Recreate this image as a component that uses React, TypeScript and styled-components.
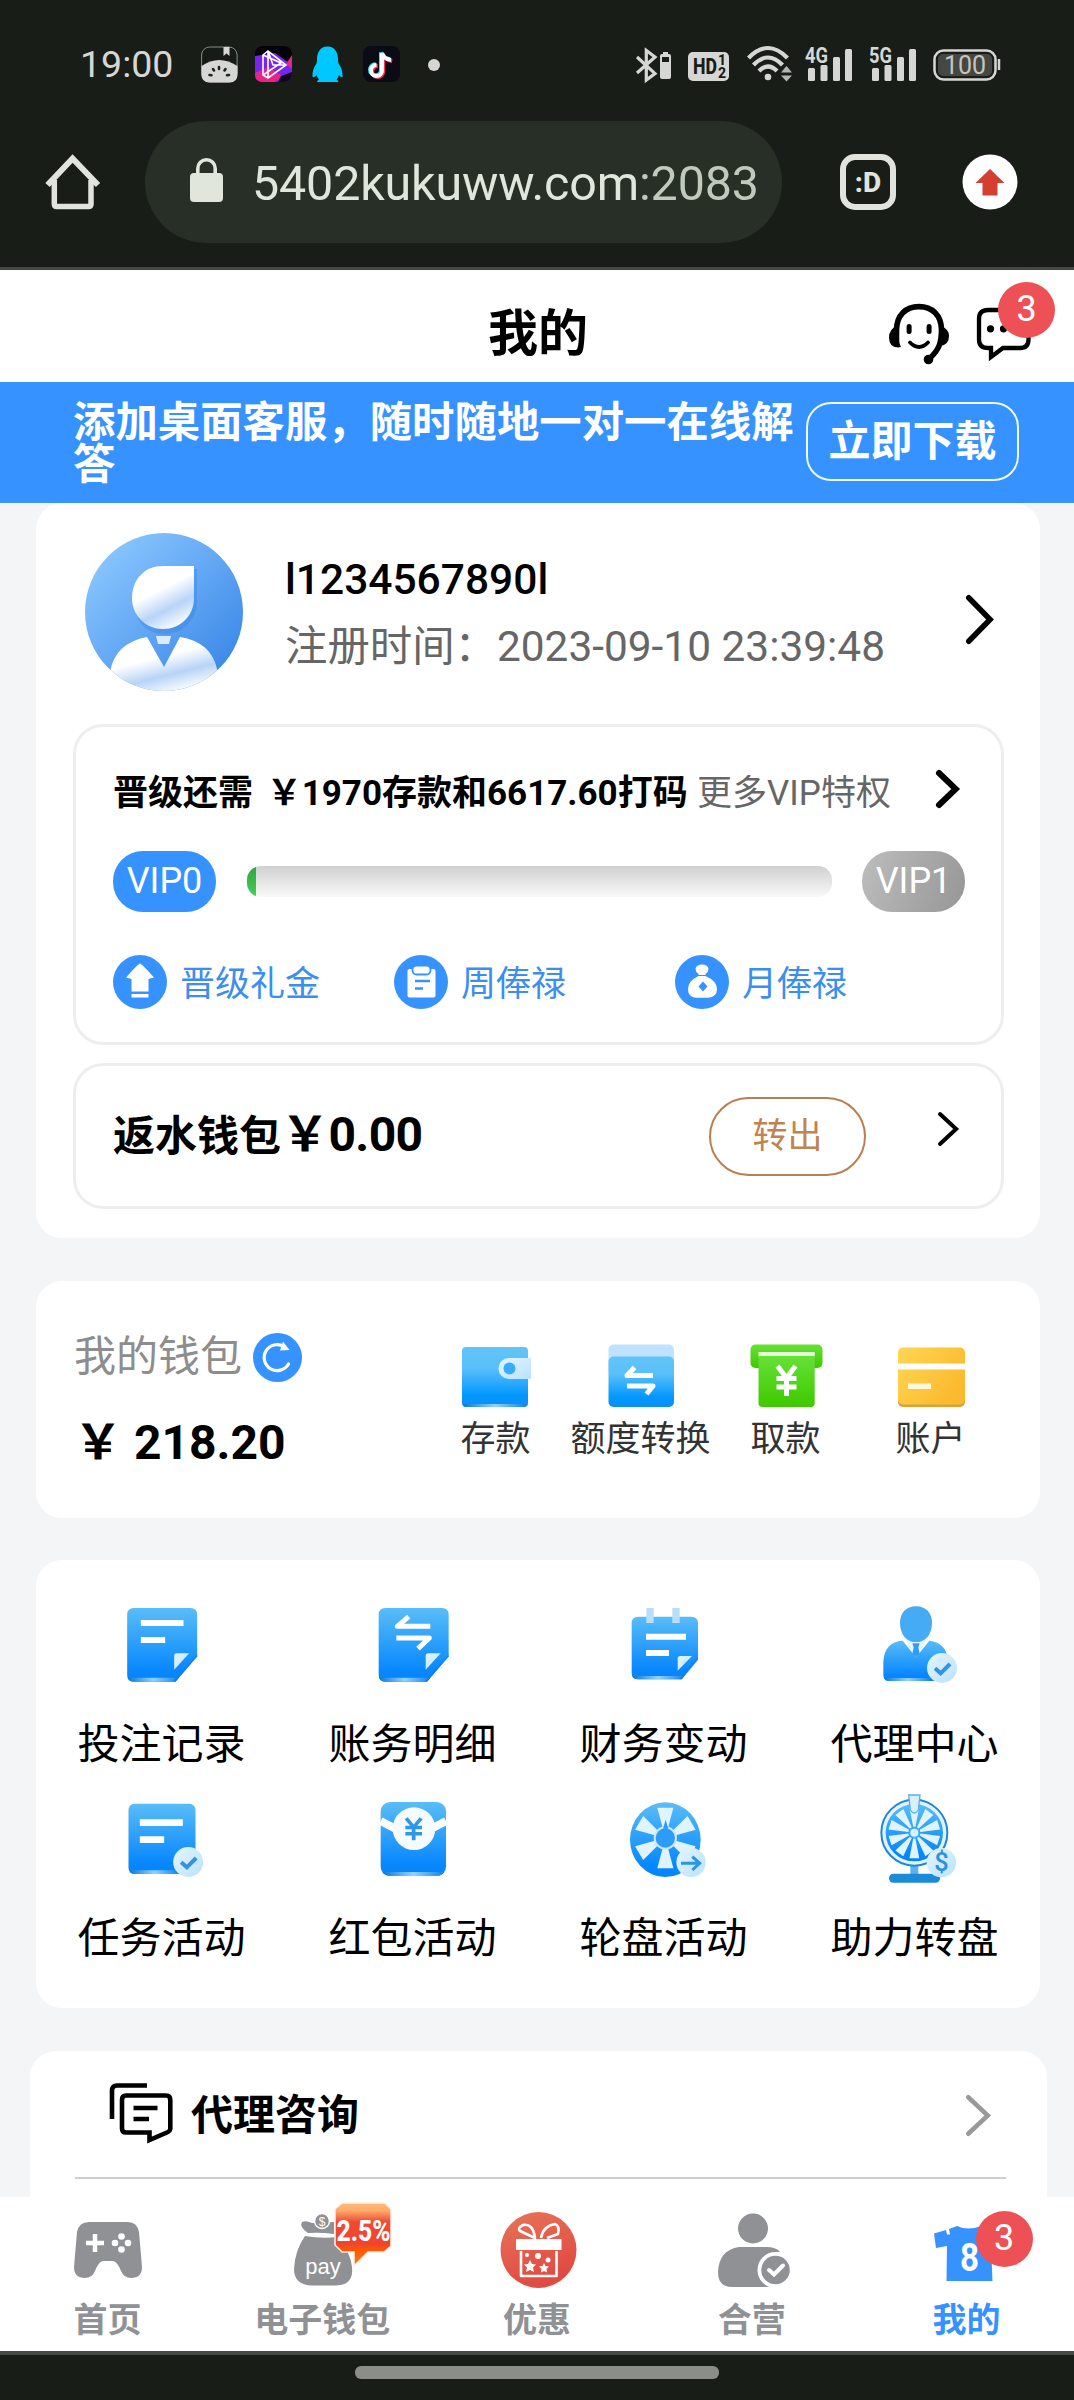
import React from "react";
import styled, { createGlobalStyle } from "styled-components";

const GlobalStyle = createGlobalStyle`
  * { box-sizing: border-box; }
  body {
    margin: 0;
    background: #f4f5f7;
    font-family: Roboto, "Noto Sans CJK SC", sans-serif;
    color: #000;
  }
  svg { display: block; flex: none; overflow: visible; }
`;

const Screen = styled.div`
  width: 1074px;
  height: 2400px;
  display: flex;
  flex-direction: column;
  overflow: hidden;
`;

/* ---------- phone chrome ---------- */

const Chrome = styled.div`
  height: 270px;
  flex: none;
  background: #191d17;
  border-bottom: 3px solid #454943;
`;

const StatusBar = styled.div`
  height: 121px;
  padding: 0 73px 0 80px;
  display: flex;
  align-items: flex-start;
  justify-content: space-between;
`;

const StatusGroup = styled.div<{ $gap: number }>`
  display: flex;
  align-items: center;
  gap: ${(p) => p.$gap}px;
  height: 38px;
  margin-top: 45px;
`;

const Clock = styled.span`
  width: 104px;
  font-size: 37.5px;
  line-height: 38px;
  color: #d6d7d5;
`;

const WifiSlot = styled.span`
  margin: 0 -4px 0 1px;
`;

const AddressBar = styled.div`
  height: 122px;
  padding: 0 50px 0 40px;
  display: flex;
  align-items: center;
`;

const UrlField = styled.div`
  width: 637px;
  height: 122px;
  margin: 0 58px 0 40px;
  padding: 2px 0 0 45px;
  border-radius: 61px;
  background: #272f26;
  display: flex;
  align-items: center;
  gap: 28px;
  font-size: 48.4px;
  letter-spacing: -0.15px;
  color: #e1e6dc;
  white-space: nowrap;
`;

const Port = styled.span`
  color: #bfc9bc;
`;

const TabCount = styled.div`
  width: 56px;
  height: 56px;
  margin-right: 66px;
  border: 6px solid #e1e4dd;
  border-radius: 15px;
  display: flex;
  align-items: center;
  justify-content: center;
  font-size: 28px;
  font-weight: 800;
  color: #e1e4dd;
`;

/* ---------- page header ---------- */

const Header = styled.header`
  height: 112px;
  flex: none;
  padding-top: 13px;
  background: #fff;
  display: grid;
  grid-template-columns: 1fr auto 1fr;
  align-items: center;
`;

const Title = styled.h1`
  margin: 0;
  padding: 2px 0 0 2px;
  grid-column: 2;
  font-size: 50px;
  line-height: 60px;
  font-weight: 700;
`;

const HeaderActions = styled.div`
  display: flex;
  justify-content: flex-end;
  gap: 17px;
  padding-right: 36px;
`;

const WithBadge = styled.div`
  position: relative;
`;

const CountBadge = styled.span<{ $top: number; $left: number }>`
  position: absolute;
  top: ${(p) => p.$top}px;
  left: ${(p) => p.$left}px;
  width: 57px;
  height: 56px;
  border-radius: 50%;
  background: #ed5156;
  color: #fff;
  font-size: 36px;
  font-weight: 400;
  line-height: 54px;
  text-align: center;
`;

const Banner = styled.div`
  height: 121px;
  flex: none;
  padding: 20px 55px 0 73px;
  background: #3692ff;
  display: flex;
  justify-content: space-between;
  color: #fff;
  font-weight: 700;
  font-size: 42.4px;
`;

const BannerText = styled.p`
  margin: 0;
  width: 724px;
  line-height: 42px;
`;

const DownloadButton = styled.button`
  width: 213px;
  height: 79px;
  margin: 0;
  padding: 0;
  border: 2.5px solid #f0faff;
  border-radius: 25px;
  background: transparent;
  color: #fff;
  font: inherit;
  font-size: 42px;
  line-height: 72px;
`;

/* ---------- cards ---------- */

const Main = styled.main`
  height: 1694px;
  flex: none;
  padding: 0 34px 0 36px;
  overflow: hidden;
`;

const Card = styled.section<{ $h: number; $mb: number }>`
  height: ${(p) => p.$h}px;
  margin-bottom: ${(p) => p.$mb}px;
  border-radius: 26px;
  background: #fff;
`;

const ProfileCard = styled(Card)`
  padding: 30px 36px 0 37px;
`;

const Profile = styled.div`
  height: 191px;
  padding: 0 10px 0 12px;
  display: flex;
  align-items: flex-start;
`;

const ProfileText = styled.div`
  flex: 1;
  margin-left: 42px;
  padding-top: 17px;
`;

const UserName = styled.div`
  font-size: 42.5px;
  font-weight: 500;
  line-height: 60px;
`;

const Registered = styled.div`
  margin-top: 7px;
  font-size: 42.4px;
  line-height: 60px;
  color: #666;
  white-space: nowrap;
`;

const ChevronSlot = styled.div<{ $mt: number; $mr?: number }>`
  margin-top: ${(p) => p.$mt}px;
  margin-right: ${(p) => p.$mr ?? 0}px;
`;

const Panel = styled.div<{ $h: number }>`
  height: ${(p) => p.$h}px;
  padding: 0 36px 0 37px;
  border: 3px solid #eee;
  border-radius: 30px;
`;

const UpgradeRow = styled.div`
  display: flex;
  align-items: center;
  height: 50px;
  margin-top: 37px;
  font-size: 35px;
  white-space: nowrap;
`;

const UpgradeText = styled.span`
  width: 584px;
  font-weight: 700;
  word-spacing: 5px;
`;

const Privileges = styled.span`
  flex: 1;
  color: #666;
`;

const LevelRow = styled.div`
  display: flex;
  align-items: center;
  justify-content: space-between;
  height: 61px;
  margin-top: 37px;
`;

const LevelPill = styled.span<{ $muted?: boolean }>`
  width: 103px;
  height: 61px;
  border-radius: 30px;
  background: ${(p) => (p.$muted ? "linear-gradient(110deg, #bdbdbd, #969696)" : "#3692ff")};
  color: #fff;
  font-size: 36px;
  line-height: 60px;
  text-align: center;
`;

const Track = styled.div`
  width: 585px;
  height: 31px;
  border-radius: 14px;
  overflow: hidden;
  background: linear-gradient(#d0d0d0, #f9f9f9);
`;

const Fill = styled.div`
  width: 9px;
  height: 100%;
  background: linear-gradient(#2fa53d, #45d05a);
`;

const BonusRow = styled.div`
  display: grid;
  grid-template-columns: repeat(3, 281px);
  margin-top: 42px;
`;

const Bonus = styled.div`
  display: flex;
  align-items: center;
  gap: 13px;
  height: 55px;
  font-size: 35px;
  color: #3b8eee;
`;

const BonusLabel = styled.span`
  padding-bottom: 3px;
`;

const RebatePanel = styled(Panel)`
  margin-top: 18px;
  display: flex;
  align-items: center;
`;

const RebateText = styled.div`
  flex: 1;
  font-size: 42px;
  line-height: 60px;
  font-weight: 700;
  white-space: nowrap;
`;

const RebateAmount = styled.span`
  font-size: 48px;
  letter-spacing: -0.6px;
`;

const TransferButton = styled.button`
  width: 157px;
  height: 79px;
  margin-right: 72px;
  padding: 0 0 7px;
  border: 2.5px solid #b97f52;
  border-radius: 40px;
  background: #fff;
  color: #c08452;
  font: inherit;
  font-size: 35px;
`;

const WalletCard = styled(Card)`
  display: flex;
  justify-content: space-between;
  padding: 0 37px 0 38px;
`;

const WalletTitle = styled.div`
  display: flex;
  align-items: center;
  gap: 11px;
  height: 60px;
  margin-top: 41px;
  font-size: 42px;
  color: #8d8d8d;
`;

const RefreshSlot = styled.span`
  padding-top: 11px;
`;

const Balance = styled.div`
  margin-top: 31px;
  font-size: 48px;
  font-weight: 700;
  line-height: 60px;
  white-space: pre;
`;

const WalletActions = styled.div`
  display: grid;
  grid-template-columns: repeat(4, 145px);
  padding-top: 62px;
`;

const WalletAction = styled.div`
  display: flex;
  flex-direction: column;
  align-items: center;
  font-size: 35px;
  line-height: 50px;
  color: #333;
  white-space: nowrap;
`;

const ActionIcon = styled.svg`
  width: 80px;
  height: 66px;
  margin-bottom: 6px;
`;

const MenuGrid = styled(Card)`
  display: grid;
  grid-template-columns: repeat(4, 1fr);
  grid-auto-rows: 194px;
  padding-top: 36px;
`;

const MenuItem = styled.div`
  display: flex;
  flex-direction: column;
  align-items: center;
  font-size: 42px;
  line-height: 60px;
`;

const MenuIcon = styled.svg`
  width: 84px;
  height: 100px;
  margin-bottom: 19px;
`;

const ContactCard = styled(Card)`
  margin: 0 -7px 0 -6px;
  padding: 0 41px 0 45px;
`;

const ContactRow = styled.div`
  height: 128px;
  padding: 0 15px 0 30px;
  border-bottom: 2px solid #cfcfcf;
  display: flex;
  align-items: center;
  font-size: 42px;
  font-weight: 700;
`;

const ContactLabel = styled.span`
  flex: 1;
  margin-left: 14px;
  padding-bottom: 5px;
`;

/* ---------- bottom bar ---------- */

const TabBar = styled.nav`
  height: 154px;
  flex: none;
  background: #fff;
  display: grid;
  grid-template-columns: repeat(5, 1fr);
`;

const Tab = styled.div<{ $active?: boolean }>`
  display: flex;
  flex-direction: column;
  align-items: center;
  padding-top: 3px;
  font-size: 34px;
  font-weight: 700;
  line-height: 54px;
  color: ${(p) => (p.$active ? "#3692ff" : "#909195")};
`;

const TabIcon = styled.svg`
  width: 130px;
  height: 93px;
`;

const GestureBar = styled.div`
  height: 49px;
  flex: none;
  border-top: 4px solid #454943;
  background: #191d17;
  display: flex;
  justify-content: center;
  padding-top: 11px;
`;

const GesturePill = styled.div`
  width: 364px;
  height: 13px;
  border-radius: 6px;
  background: #8b8d88;
`;

/* ---------- icons ---------- */

const Chevron = ({ w, h, s, c = "#000" }: { w: number; h: number; s: number; c?: string }) => (
  <svg width={w} height={h} fill="none" stroke={c} strokeWidth={s} strokeLinecap="round">
    <path d={`M${s / 2} ${s / 2} L${w - s / 1.4} ${h / 2} L${s / 2} ${h - s / 2}`} />
  </svg>
);

const Signal = ({ label }: { label: string }) => (
  <svg width="48" height="38" viewBox="0 0 48 38" fill="#d6d7d5">
    <text x="0" y="17.500" fontSize="22" fontWeight="700" fontFamily="Roboto" textLength="23" lengthAdjust="spacingAndGlyphs">{label}</text>
    <rect x="3" y="23" width="7" height="13" rx="1.500" />
    <rect x="15.500" y="20" width="7" height="16" rx="1.500" />
    <rect x="28" y="12" width="7" height="24" rx="1.500" />
    <rect x="40" y="4" width="7" height="32" rx="1.500" />
  </svg>
);

const Gradients = () => (
  <svg width="0" height="0">
    <defs>
      <linearGradient id="blue" x1="0" y1="0" x2="0" y2="1">
        <stop offset="0" stopColor="#59bdf7" />
        <stop offset="0.85" stopColor="#0787ff" />
        <stop offset="1" stopColor="#0a83f5" />
      </linearGradient>
      <linearGradient id="sky" x1="0" y1="0" x2="0" y2="1">
        <stop offset="0" stopColor="#62c4f8" />
        <stop offset="0.35" stopColor="#5ac0fa" />
        <stop offset="0.8" stopColor="#0398ff" />
        <stop offset="1" stopColor="#0c8ff0" />
      </linearGradient>
      <linearGradient id="pale" x1="0" y1="0" x2="1" y2="1">
        <stop offset="0" stopColor="#e4f5ff" />
        <stop offset="1" stopColor="#b9e2ff" />
      </linearGradient>
      <linearGradient id="glint" x1="0" x2="1">
        <stop offset="0" stopColor="#0a78d8" />
        <stop offset="0.5" stopColor="#8fd4ff" />
        <stop offset="1" stopColor="#1183ea" />
      </linearGradient>
      <linearGradient id="green" x1="0" y1="0" x2="0" y2="1">
        <stop offset="0" stopColor="#66e136" />
        <stop offset="1" stopColor="#3fc800" />
      </linearGradient>
      <linearGradient id="gold" x1="0" y1="0" x2="1" y2="0.6">
        <stop offset="0" stopColor="#ffd654" />
        <stop offset="1" stopColor="#fbb92e" />
      </linearGradient>
      <linearGradient id="avatarBg" x1="0" y1="0" x2="1" y2="1">
        <stop offset="0.1" stopColor="#8ac7ff" />
        <stop offset="0.9" stopColor="#3a87e8" />
      </linearGradient>
      <linearGradient id="silk" x1="0.2" y1="0" x2="0.7" y2="1">
        <stop offset="0.4" stopColor="#fff" />
        <stop offset="0.7" stopColor="#b7d4f7" />
        <stop offset="1" stopColor="#fff" />
      </linearGradient>
      <linearGradient id="red" x1="0" y1="0" x2="0.4" y2="1">
        <stop offset="0" stopColor="#e87458" />
        <stop offset="1" stopColor="#e04a42" />
      </linearGradient>
      <linearGradient id="orange" x1="0" y1="0" x2="0" y2="1">
        <stop offset="0" stopColor="#ffbb78" />
        <stop offset="0.12" stopColor="#ffab6a" />
        <stop offset="0.3" stopColor="#ee4a35" />
        <stop offset="0.65" stopColor="#ef4530" />
        <stop offset="0.75" stopColor="#ff5a00" />
        <stop offset="1" stopColor="#ff7a1a" />
      </linearGradient>
    </defs>
  </svg>
);

const BluetoothIcon = () => (
  <svg width="36" height="38" viewBox="0 0 36 38">
    <path d="M1 12 L19 28.500 L10.300 35 V5.500 L19 12 L1 28" fill="none" stroke="#d6d7d5" strokeWidth="3.200" />
    <rect x="27" y="7" width="5" height="4" fill="#d6d7d5" />
    <path d="M26 9h7q2 0 2 2v21q0 2-2 2h-7q-2 0-2-2V11q0-2 2-2zM26 12v5h7v-5z" fill="#d6d7d5" fillRule="evenodd" />
  </svg>
);

const HdIcon = () => (
  <svg width="42" height="38" viewBox="0 0 42 38">
    <rect x="0" y="7" width="41" height="29" rx="5" fill="#d6d7d5" />
    <g fill="#191d17" fontFamily="Roboto" fontWeight="800">
      <text x="5" y="29" fontSize="22" textLength="24" lengthAdjust="spacingAndGlyphs">HD</text>
      <text x="30" y="20" fontSize="14">1</text>
      <text x="30" y="33" fontSize="14">2</text>
    </g>
  </svg>
);

const WifiIcon = () => (
  <svg width="46" height="38" viewBox="0 0 46 38">
    <g fill="none" stroke="#d6d7d5" strokeWidth="4.200">
      <path d="M1.500 13 Q21 -7 40.500 13" />
      <path d="M6.500 20 Q21 5 35.500 20" />
      <path d="M12 26 Q21 17 30 26" />
    </g>
    <circle cx="21" cy="32" r="3.300" fill="#d6d7d5" />
    <path d="M34 27.500h11L39.500 21zM34 30.500h11L39.500 36.500z" fill="#b4b6b3" />
  </svg>
);

const BatteryIcon = () => (
  <svg width="68" height="38" viewBox="0 0 68 38">
    <rect x="1.500" y="5.500" width="61" height="29" rx="9" fill="none" stroke="#d6d7d5" strokeWidth="2.500" />
    <rect x="5" y="9" width="54" height="22" rx="5" fill="#444743" />
    <path d="M66 14v11" stroke="#d6d7d5" strokeWidth="2.500" />
    <text x="32" y="29" fontSize="25" fontFamily="Roboto" fill="#c3c5c2" textAnchor="middle">100</text>
  </svg>
);

const MelonIcon = () => (
  <svg width="37" height="38" viewBox="0 0 37 38">
    <rect x="0.600" y="2" width="35.500" height="35" rx="8" fill="#171b16" stroke="#8a8c89" strokeWidth="1" />
    <path d="M0.500 21 Q18 9 36.500 21 V29q0 8.500-8 8.500H8.500q-8 0-8-8.500z" fill="#d6d7d5" />
    <path d="M22.500 2h6v9l-3-2.500-3 2.500z" fill="#d6d7d5" />
    <g stroke="#20241f" strokeWidth="2.600" strokeLinecap="round">
      <path d="M18 22v2M12 24l1 1.500M24.500 24l-1 1.500M8.500 30l2 .3M28 30l-2 .3" />
    </g>
  </svg>
);

const PrismIcon = () => (
  <svg width="37" height="38" viewBox="0 0 37 38">
    <rect y="1" width="37" height="36" rx="8" fill="#050108" />
    <path d="M0 11 L20 8 L37 20 V29q0 8-8 8H8q-8 0-8-8z" fill="#7426ec" />
    <path d="M0 28 L14 22 L27 31 L20 37H8q-8 0-8-8zM31 19l6-9v14z" fill="#e92489" />
    <path d="M26 31l11-4v2q0 8-8 8h-6z" fill="#12051f" />
    <path d="M8 10l5-4 18 14-18 13-5-3zM13 6v27M8 10l18 8-18 12M31 20H18l-5-14" fill="none" stroke="#fff" strokeWidth="1.600" />
  </svg>
);

const PenguinIcon = () => (
  <svg width="37" height="38" viewBox="-3 0 37 38">
    <path d="M15.500 1.500C23 1.500 26 8 26 14q0 3 .8 5C29 22 31 27 30.500 32q-1 1-3.500-2-1 3-2.500 4.500 2 1 2 2.500H5q0-1.500 2-2.500Q5.500 33 4.500 30 2 33 .7 32C0 27 2 22 4.200 19 5 17 5 15.500 5 14 5 8 8 1.500 15.500 1.500z" fill="#00c8ff" />
  </svg>
);

const NoteIcon = () => {
  const d = "M19 8v17.500a5.500 5.500 0 1 1-5.500-5.500M19 8q1.500 6 9 7";
  return (
    <svg width="37" height="38" viewBox="0 0 37 38">
      <rect y="1" width="37" height="36" rx="8" fill="#0b0b15" />
      <g fill="none" strokeWidth="4">
        <path d={d} stroke="#2be8e2" transform="translate(-1 -.8)" />
        <path d={d} stroke="#fb3558" transform="translate(1.200 1)" />
        <path d={d} stroke="#fff" />
      </g>
    </svg>
  );
};

const HomeIcon = () => (
  <svg width="65" height="65" viewBox="0 0 65 65" fill="none" stroke="#e1e4dd" strokeWidth="5.500" strokeLinejoin="round">
    <path d="M7.500 35 L32.600 8.500 L58 35" strokeWidth="6" strokeLinejoin="miter" />
    <path d="M14.300 30 V54q0 2.500 2.500 2.500H48.500q2.500 0 2.500-2.500V30" />
  </svg>
);

const LockIcon = () => (
  <svg width="34" height="48" viewBox="0 2 34 48">
    <rect x="0" y="16" width="33" height="29" rx="4" fill="#e1e6dc" />
    <path d="M7.800 18v-6.500a8.700 8.700 0 0 1 17.400 0V18" fill="none" stroke="#e1e6dc" strokeWidth="3.600" />
  </svg>
);

const UpdateIcon = () => (
  <svg width="56" height="56" viewBox="0 0 56 56">
    <circle cx="28" cy="28" r="27.500" fill="#fff" />
    <path d="M28 15 L42.500 29 H35.500 V41.500 H20.500 V29 H13.500z" fill="#d33f30" />
  </svg>
);

const HeadsetIcon = () => (
  <svg width="68" height="68" viewBox="0 0 68 68">
    <path d="M11.500 45 V31 C11.500 16 21 7.600 34 7.600 S56.500 16 56.500 31 C56.500 44 54 51 44 60" fill="none" stroke="#000" strokeWidth="5.600" />
    <path d="M12 27 Q4 30 4 38.500 Q4 48 13 48.500 L16 48 Q12 40 12 27zM56 27 Q64 30 64 37 Q64 46 55 47 Q57 38 56 27z" fill="#000" />
    <circle cx="43.500" cy="60.500" r="4.800" fill="#000" />
    <rect x="21.600" y="25" width="5" height="10" rx="2.500" />
    <rect x="41.600" y="25" width="5" height="10" rx="2.500" />
    <path d="M25 43.500 Q34 52.500 43 43.500" fill="none" stroke="#000" strokeWidth="3.800" strokeLinecap="round" />
  </svg>
);

const ChatIcon = () => (
  <svg width="68" height="68" viewBox="0 0 68 68">
    <path d="M18 11 H50 Q58.500 11 58.500 19.500 V40.500 Q58.500 49 50 49 H33 L21 58 V49 H18 Q9 49 9 40.500 V19.500 Q9 11 18 11z" fill="none" stroke="#000" strokeWidth="4.300" />
    <circle cx="20.500" cy="29.800" r="3.600" />
    <circle cx="33.500" cy="29.800" r="3.600" />
    <circle cx="46.500" cy="29.800" r="3.600" />
  </svg>
);

const Avatar = () => (
  <svg width="158" height="158" viewBox="0 0 158 158">
    <clipPath id="round"><circle cx="79" cy="79" r="79" /></clipPath>
    <g clipPath="url(#round)">
      <rect width="158" height="158" fill="url(#avatarBg)" />
      <path d="M80 36 H112 V68 C112 86 98 101 80 101 S52 90 50 76z" fill="#2f78dc" opacity=".3" />
      <path d="M78 33 H109 V65 C109 83 95 96 78 96 S47 83 47 65 C47 46 60 33 78 33z" fill="url(#silk)" />
      <path d="M62 104 Q30 110 25 139 V158 H132 V136 Q126 109 95 104 L79 134z" fill="url(#silk)" />
      <path d="M71 103h15l-2 8H73z" fill="#dcebff" />
    </g>
  </svg>
);

const UpIcon = () => (
  <svg width="54" height="54" viewBox="0 0 54 54">
    <circle cx="27" cy="27" r="27" fill="#3692ff" />
    <path d="M27 8.500 Q28.500 8.500 41 22.500 L35.500 24 V36.500 H18.500 V24 L13 22.500 Q25.500 8.500 27 8.500zM18.500 39h17v3.500h-17z" fill="#fff" />
  </svg>
);

const ClipboardIcon = () => (
  <svg width="54" height="54" viewBox="0 0 54 54">
    <circle cx="27" cy="27" r="27" fill="#3692ff" />
    <rect x="13.500" y="14" width="28" height="28.500" rx="2" fill="#fff" />
    <rect x="18.500" y="10.500" width="18" height="9" rx="4" fill="#fff" stroke="#3692ff" strokeWidth="1.800" />
    <path d="M21 26h15M21 33.500h8" stroke="#3692ff" strokeWidth="2.600" />
  </svg>
);

const MoneyIcon = () => (
  <svg width="54" height="54" viewBox="0 0 54 54">
    <circle cx="27" cy="27" r="27" fill="#3692ff" />
    <path d="M20.500 14a6.500 4.500 0 0 1 13 0q0 3-3 5v2q11.500 5 11.500 13t-9 8.800H21q-8-.8-8-8.800t10.500-13v-2q-3-2-3-5z" fill="#fff" />
    <path d="M21 20.500h12" stroke="#3692ff" strokeWidth="1" />
    <path d="M28 26.500l4.500 5-4.500 5-4.500-5z" fill="#3692ff" />
  </svg>
);

const RefreshIcon = () => (
  <svg width="49" height="49" viewBox="0 0 49 49">
    <circle cx="24.500" cy="24.500" r="24.500" fill="#3692ff" />
    <path d="M35.500 31 A13 13 0 1 1 31 13.500" fill="none" stroke="#fff" strokeWidth="3.200" strokeLinecap="round" />
    <path d="M30 8.500 L36.500 17 L27 17.500z" fill="#fff" />
  </svg>
);

const Check = ({ x, y }: { x: number; y: number }) => (
  <g transform={`translate(${x} ${y})`}>
    <circle r="45" fill="url(#pale)" />
    <path d="M-21 1 L-4 16 L24 -12" fill="none" stroke="#3192e6" strokeWidth="12" />
  </g>
);

const Yen = ({ c, s }: { c: string; s: number }) => (
  <path d="M-9 -15 L0 -3 L9 -15 M0 -4 V15 M-10 -2.500 H10 M-10 6 H10" fill="none" stroke={c} strokeWidth={s} />
);

const Fold = ({ x, y }: { x: number; y: number }) => (
  <g transform={`translate(${x} ${y})`}>
    <path d="M0 49 V8 Q0 0 8 0 H45z" fill="url(#pale)" />
    <path d="M69 4 L69 10 L5 84 L-3 84 Z" fill="#1479dc" opacity=".7" />
  </g>
);

const Sheet = () => (
  <>
    <path d="M250 84 H420 Q440 84 440 104 V229 L375 305 H250 Q230 305 230 285 V104 Q230 84 250 84z" fill="url(#blue)" />
    <path d="M232 293 H385 L375 305 H250 Q236 305 232 293z" fill="url(#glint)" />
    <Fold x={371} y={220} />
  </>
);

const spokes = (n: number, r1: number, r2: number, a: number) =>
  Array.from({ length: n }, (_, i) => {
    const t = (i * 2 * Math.PI) / n - Math.PI / 2;
    const p = (r: number, d: number) => `${r * Math.cos(t + d)} ${r * Math.sin(t + d)}`;
    return <path key={i} d={`M${p(r1, -a)} L${p(r2, -a)} L${p(r2, a)} L${p(r1, a)}z`} fill="#e0f4ff" />;
  });

const menu = [
  {
    label: "投注记录",
    box: "208.500 48 252 300",
    art: <><Sheet /><path d="M271 129h128M271 180h73" stroke="#fff" strokeWidth="18" /></>,
  },
  {
    label: "账务明细",
    box: "207 48 252 300",
    art: <><Sheet /><path d="M385 139H286L320 110M283 174H382L348 206" fill="none" stroke="#fff" strokeWidth="15" strokeLinejoin="round" /></>,
  },
  {
    label: "财务变动",
    box: "213 48 252 300",
    art: (
      <>
        <path d="M262 110 H421 Q441 110 441 130 V237 L391 298 H262 Q242 298 242 278 V130 Q242 110 262 110z" fill="url(#blue)" />
        <path d="M244 288 H399 L391 298 H262 Q248 298 244 288z" fill="url(#glint)" />
        <path d="M441 232v8l-48 58h-7z" fill="#1479dc" opacity=".7" />
        <path d="M380 272v-36q0-8 8-8h35z" fill="url(#pale)" />
        <path d="M286 84h22v45h-22zM364 84h22v45h-22z" fill="#b9defb" />
        <path d="M285 170h120M285 219h69" stroke="#fff" strokeWidth="18" />
      </>
    ),
  },
  {
    label: "代理中心",
    box: "966 48 252 300",
    art: (
      <>
        <path d="M1055 182 Q1000 186 997 245 V285 Q997 303 1015 303 H1190 V235 Q1184 188 1135 182 L1095 232z" fill="url(#blue)" />
        <path d="M1000 294h140v9h-125q-12 0-15-9z" fill="url(#glint)" />
        <path d="M1062 178l28 50h10l28-50-33 14z" fill="#e6f5ff" />
        <path d="M1084 190h22l-4 12 4 20-11 10-11-10 4-20z" fill="#2f9df5" />
        <path d="M1095 79c30 0 48 20 48 50 0 36-22 58-48 58s-48-22-48-58c0-30 18-50 48-50z" fill="#45abf5" />
        <Check x={1173} y={264} />
      </>
    ),
  },
  {
    label: "任务活动",
    box: "208.500 630 252 300",
    art: (
      <>
        <rect x="234" y="671" width="201" height="211" rx="18" fill="url(#blue)" />
        <path d="M236 871h150v11H252q-13 0-16-11z" fill="url(#glint)" />
        <path d="M268 728h129M268 779h73" stroke="#fff" strokeWidth="20" />
        <Check x={413} y={846} />
      </>
    ),
  },
  {
    label: "红包活动",
    box: "960 630 252 300",
    art: (
      <>
        <rect x="989" y="666" width="196" height="222" rx="28" fill="url(#blue)" />
        <path d="M994 876h186q-8 12-24 12h-138q-16 0-24-12z" fill="url(#glint)" />
        <path d="M989 723l98 52 98-52" fill="none" stroke="#fff" strokeWidth="24" />
        <circle cx="1089" cy="746" r="64" fill="#f6fbff" />
        <g transform="translate(1088 748) scale(2.500 2.200)"><Yen c="#2e98e8" s={4.500} /></g>
      </>
    ),
  },
  {
    label: "轮盘活动",
    box: "213 630 252 300",
    art: (
      <>
        <ellipse cx="343" cy="779" rx="106" ry="112" fill="url(#blue)" />
        <g transform="translate(343 774)">
          {spokes(6, 30, 94, 0.26)}
          <circle r="32" fill="#2d9cf7" stroke="#c8e8ff" strokeWidth="6" />
          <path d="M-7 -28L1 -55L9 -28z" fill="#2d9cf7" />
        </g>
        <circle cx="420" cy="847" r="44" fill="url(#pale)" />
        <path d="M390 850h54M424 830l22 20-22 20" fill="none" stroke="#2b93e8" strokeWidth="9" />
      </>
    ),
  },
  {
    label: "助力转盘",
    box: "966 630 252 300",
    art: (
      <>
        <path d="M1078 850h24v36h-24z" fill="#5cb2ec" />
        <rect x="1014" y="881" width="153" height="27" rx="13" fill="#1b8ad8" />
        <circle cx="1090" cy="758" r="99" fill="#e0f3ff" stroke="#2386d2" strokeWidth="6" />
        <circle cx="1090" cy="758" r="86" fill="url(#blue)" />
        <g transform="translate(1090 758)">
          {spokes(10, 18, 78, 0.19)}
          <circle r="14" fill="#d8f0ff" stroke="#4aaef5" strokeWidth="4" />
        </g>
        <path d="M1073 645h34l-5 45q-12 18-24 0z" fill="#d8f0ff" stroke="#55b0ef" strokeWidth="4" />
        <circle cx="1171" cy="848" r="44" fill="url(#pale)" />
        <text x="1171" y="874" fontSize="76" fontWeight="500" fontFamily="Roboto" textAnchor="middle" fill="#2d8fe0">$</text>
      </>
    ),
  },
];

const actions = [
  {
    label: "存款",
    art: (
      <>
        <rect x="6" y="4" width="66" height="60" rx="4" fill="url(#sky)" />
        <path d="M7 61h64q-1 3-4 3H10q-2 0-3-3z" fill="url(#glint)" />
        <path d="M75 15H53a10.500 10.500 0 0 0 0 21H75z" fill="url(#pale)" />
        <circle cx="53.500" cy="25.500" r="6" fill="#38adfa" />
      </>
    ),
  },
  {
    label: "额度转换",
    art: (
      <>
        <rect x="7.500" y="1.500" width="65.500" height="30" rx="5" fill="#bfe3ff" />
        <rect x="7.500" y="13.500" width="65.500" height="50.500" rx="5" fill="url(#sky)" />
        <path d="M52 32.500H26L33.500 24.500M26 43H52L45.500 51" fill="none" stroke="#fff" strokeWidth="5" strokeLinejoin="round" />
      </>
    ),
  },
  {
    label: "取款",
    art: (
      <>
        <rect x="4.500" y="1.500" width="72" height="23.500" rx="5" fill="url(#green)" />
        <rect x="12.500" y="9" width="56.200" height="5" fill="#e5fbdc" />
        <path d="M12.500 13h56.200v47q0 4-4 4H16.500q-4 0-4-4z" fill="url(#green)" />
        <g transform="translate(40.500 38)"><Yen c="#fff" s={5} /></g>
      </>
    ),
  },
  {
    label: "账户",
    art: (
      <>
        <rect x="7" y="6" width="67" height="58" rx="5" fill="#dda034" />
        <rect x="7" y="4.500" width="67" height="57" rx="5" fill="url(#gold)" />
        <path d="M7 20.500h67v6H7z" fill="#fff" />
        <path d="M17 40.500h23v5.500H17z" fill="#fff8dc" />
      </>
    ),
  },
];

const bonuses = [
  { label: "晋级礼金", icon: <UpIcon /> },
  { label: "周俸禄", icon: <ClipboardIcon /> },
  { label: "月俸禄", icon: <MoneyIcon /> },
];

const GREY = "#909195";

const tabs = [
  {
    label: "首页",
    art: (
      <>
        <path d="M32 17 H71 Q80 17 82 27 L85 62 Q85 73 74 73 Q67 73 64 66 Q60 56 56 56 H46 Q42 56 38 66 Q35 73 28 73 Q17 73 17 62 L20 27 Q22 17 32 17z" fill={GREY} />
        <path d="M38 29v18M29 38h18" stroke="#fff" strokeWidth="4.500" />
        <g fill="#fff"><circle cx="64.500" cy="31.500" r="3.300" /><circle cx="64.500" cy="44.500" r="3.300" /><circle cx="58" cy="38" r="3.300" /><circle cx="71" cy="38" r="3.300" /></g>
      </>
    ),
  },
  {
    label: "电子钱包",
    art: (
      <>
        <path d="M30 17 Q34 15 40 18 L62 17 V29 Q48 27 36 28 Q27 22 30 17z" fill={GREY} />
        <path d="M33 31 Q50 34 65 32 Q79 48 80 62 Q82 80 64 80.500 H40 Q22 80 22 64 Q23 45 33 31z" fill={GREY} />
        <circle cx="50" cy="16" r="7.500" fill={GREY} stroke="#fff" strokeWidth="1.500" />
        <text x="50" y="20.500" fontSize="12" fontWeight="400" fontFamily="Liberation Sans" fill="#fff" textAnchor="middle">$</text>
        <text x="51" y="69" fontSize="22" fontWeight="400" fontFamily="Liberation Sans" fill="#fff" textAnchor="middle">pay</text>
        <path d="M70 -2h43l6 6v37l-7 6H96L82 61V47H70l-7-7V4z" fill="url(#orange)" stroke="#fff0e8" strokeWidth="1.500" />
        <text x="91.500" y="36" fontSize="30" fontWeight="800" fontFamily="Roboto" fill="#fff" textAnchor="middle" textLength="54" lengthAdjust="spacingAndGlyphs">2.5%</text>
      </>
    ),
  },
  {
    label: "优惠",
    art: (
      <>
        <circle cx="51.500" cy="45" r="38" fill="url(#red)" />
        <g fill="none" stroke="#fff" strokeWidth="2.600" strokeLinejoin="round">
          <path d="M48 33 L33 26 Q30 23 36 20 Q46 18 48 33zM54 33 Q56 21 68 19 Q73 21 71 29 L60 33" />
          <path d="M34 46 V71 H69.500 V46" />
        </g>
        <rect x="29" y="34" width="45.500" height="11" fill="#fff" />
        <path d="M43 55l2 4 4 .5-3 3 1 4.500-4-2-4 2 1-4.500-3-3 4-.5zM57 58l1.500 3 3.500.5-2.500 2.500.5 3.500-3-1.500-3 1.500.5-3.500-2.500-2.500 3.500-.5z" fill="#fff" />
        <circle cx="61" cy="55" r="2.500" fill="#fff" /><circle cx="51" cy="51" r="3" fill="#fff" /><circle cx="40" cy="50" r="2" fill="#fff" />
      </>
    ),
  },
  {
    label: "合营",
    art: (
      <>
        <circle cx="51" cy="23.500" r="15" fill={GREY} />
        <path d="M37 42 H65 Q80 42 84 58 V82 H30 Q16 82 16 67 Q17 45 37 42z" fill={GREY} />
        <path d="M73.500 47a18 18 0 1 0 0 36h16V47z" fill="#fff" />
        <circle cx="73.500" cy="65" r="14.300" fill={GREY} />
        <path d="M67 65l5 4.500 9-9" fill="none" stroke="#fff" strokeWidth="4" strokeLinecap="round" />
      </>
    ),
  },
  {
    label: "我的",
    active: true,
    art: (
      <>
        <path d="M17 28.500 L29 25 L30 29.500 H33 L32 24 L40 21 Q51 26 64 21 L84 28 L82 43 L74 41 L75.500 76 H29.500 L30 41 L19 43z" fill="#3692ff" />
        <text x="52.500" y="65.500" fontSize="39" fontWeight="700" fontFamily="Roboto" fill="#fff" textAnchor="middle" textLength="19" lengthAdjust="spacingAndGlyphs">8</text>
      </>
    ),
  },
];

const ContactIcon = () => (
  <svg width="72" height="72" viewBox="0 0 72 72" fill="none" stroke="#000" strokeWidth="4.600">
    <path d="M7 41 V13 Q7 7.500 12 7.500 H42" />
    <path d="M21 17.500 H61 Q65.300 17.500 65.300 22 V51 Q65 53 63 54 L44.500 62 V54.500 H21 Q17 54.500 17 50.500 V22 Q17 17.500 21 17.500z" />
    <path d="M28.500 30h24M28.500 41h15.500" />
  </svg>
);

export default function App() {
  return (
    <Screen>
      <GlobalStyle />
      <Gradients />
      <Chrome>
        <StatusBar>
          <StatusGroup $gap={17}>
            <Clock>19:00</Clock>
            <MelonIcon />
            <PrismIcon />
            <PenguinIcon />
            <NoteIcon />
            <svg width="42" height="38"><circle cx="17" cy="20" r="6" fill="#d6d7d5" /></svg>
          </StatusGroup>
          <StatusGroup $gap={16}>
            <BluetoothIcon />
            <HdIcon />
            <WifiSlot><WifiIcon /></WifiSlot>
            <Signal label="4G" />
            <Signal label="5G" />
            <BatteryIcon />
          </StatusGroup>
        </StatusBar>
        <AddressBar>
          <HomeIcon />
          <UrlField>
            <LockIcon />
            <span>5402kukuww.com<Port>:2083</Port></span>
          </UrlField>
          <TabCount>:D</TabCount>
          <UpdateIcon />
        </AddressBar>
      </Chrome>

      <Header>
        <Title>我的</Title>
        <HeaderActions>
          <HeadsetIcon />
          <WithBadge>
            <ChatIcon />
            <CountBadge $top={-17} $left={28}>3</CountBadge>
          </WithBadge>
        </HeaderActions>
      </Header>
      <Banner>
        <BannerText>添加桌面客服，随时随地一对一在线解答</BannerText>
        <DownloadButton>立即下载</DownloadButton>
      </Banner>

      <Main>
        <ProfileCard $h={735} $mb={43}>
          <Profile>
            <Avatar />
            <ProfileText>
              <UserName>l1234567890l</UserName>
              <Registered>注册时间：2023-09-10 23:39:48</Registered>
            </ProfileText>
            <ChevronSlot $mt={62}><Chevron w={28} h={49} s={5.500} /></ChevronSlot>
          </Profile>
          <Panel $h={321}>
            <UpgradeRow>
              <UpgradeText>晋级还需 ￥1970存款和6617.60打码</UpgradeText>
              <Privileges>更多VIP特权</Privileges>
              <ChevronSlot $mt={0} $mr={5}><Chevron w={24} h={38} s={6} /></ChevronSlot>
            </UpgradeRow>
            <LevelRow>
              <LevelPill>VIP0</LevelPill>
              <Track><Fill /></Track>
              <LevelPill $muted>VIP1</LevelPill>
            </LevelRow>
            <BonusRow>
              {bonuses.map((b) => (
                <Bonus key={b.label}>{b.icon}<BonusLabel>{b.label}</BonusLabel></Bonus>
              ))}
            </BonusRow>
          </Panel>
          <RebatePanel $h={146}>
            <RebateText>返水钱包<RebateAmount>￥0.00</RebateAmount></RebateText>
            <TransferButton>转出</TransferButton>
            <ChevronSlot $mt={-14} $mr={6}><Chevron w={21} h={34} s={4} /></ChevronSlot>
          </RebatePanel>
        </ProfileCard>

        <WalletCard $h={237} $mb={42}>
          <div>
            <WalletTitle>我的钱包<RefreshSlot><RefreshIcon /></RefreshSlot></WalletTitle>
            <Balance>￥ 218.20</Balance>
          </div>
          <WalletActions>
            {actions.map((a) => (
              <WalletAction key={a.label}>
                <ActionIcon viewBox="0 0 80 66">{a.art}</ActionIcon>
                {a.label}
              </WalletAction>
            ))}
          </WalletActions>
        </WalletCard>

        <MenuGrid $h={448} $mb={43}>
          {menu.map((m) => (
            <MenuItem key={m.label}>
              <MenuIcon viewBox={m.box}>{m.art}</MenuIcon>
              {m.label}
            </MenuItem>
          ))}
        </MenuGrid>

        <ContactCard $h={200} $mb={0}>
          <ContactRow>
            <ContactIcon />
            <ContactLabel>代理咨询</ContactLabel>
            <ChevronSlot $mt={3}><Chevron w={25} h={41} s={4.500} c="#999" /></ChevronSlot>
          </ContactRow>
        </ContactCard>
      </Main>

      <TabBar>
        {tabs.map((t) => (
          <Tab key={t.label} $active={t.active}>
            <WithBadge>
              <TabIcon viewBox="-15 -5 130 93">{t.art}</TabIcon>
              {t.active && <CountBadge $top={11} $left={74}>3</CountBadge>}
            </WithBadge>
            {t.label}
          </Tab>
        ))}
      </TabBar>
      <GestureBar><GesturePill /></GestureBar>
    </Screen>
  );
}
